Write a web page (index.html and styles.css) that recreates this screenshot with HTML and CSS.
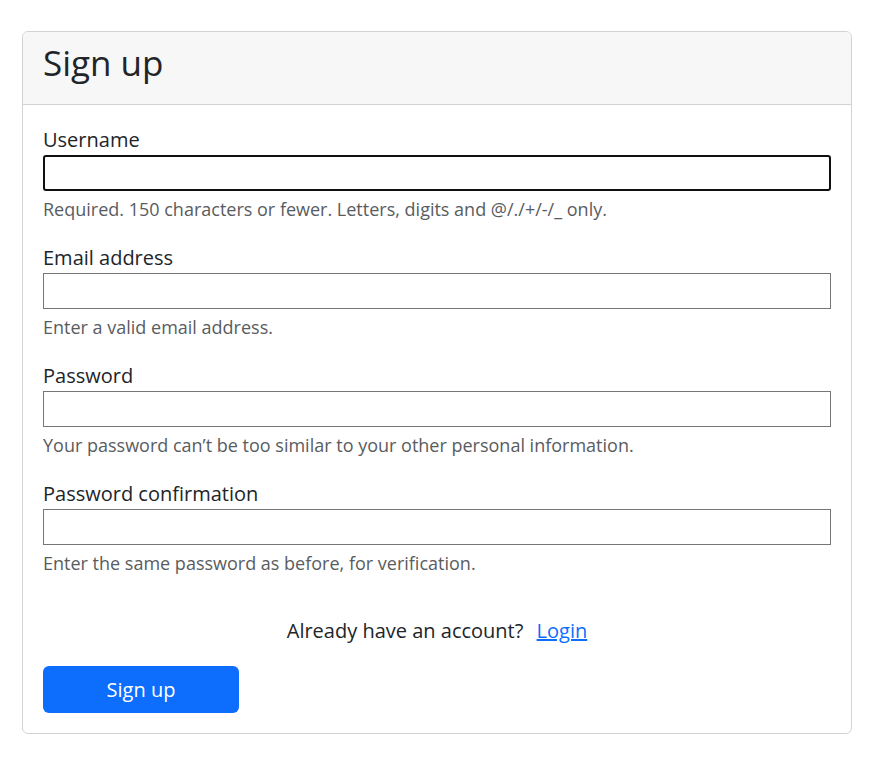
FILE: index.html
```html
<!DOCTYPE html>
<html lang="en">
<head>
<meta charset="utf-8">
<title>Sign up</title>
<link rel="stylesheet" href="styles.css">
</head>
<body>
<div class="page">
  <div class="card">
    <div class="card-header">
      <h1 class="title">Sign up</h1>
    </div>
    <form class="card-body">
      <div class="group">
        <label class="label" for="username">Username</label>
        <input class="input focused" id="username" type="text">
        <div class="help">Required. 150 characters or fewer. Letters, digits and @/./+/-/_ only.</div>
      </div>
      <div class="group">
        <label class="label" for="email">Email address</label>
        <input class="input" id="email" type="text">
        <div class="help">Enter a valid email address.</div>
      </div>
      <div class="group">
        <label class="label" for="password1">Password</label>
        <input class="input" id="password1" type="password">
        <div class="help">Your password can’t be too similar to your other personal information.</div>
      </div>
      <div class="group">
        <label class="label" for="password2">Password confirmation</label>
        <input class="input" id="password2" type="password">
        <div class="help">Enter the same password as before, for verification.</div>
      </div>
      <p class="account">Already have an account? <a class="login" href="#">Login</a></p>
      <button class="btn" type="button">Sign up</button>
    </form>
  </div>
</div>
</body>
</html>
```
FILE: styles.css
```css
* { box-sizing: border-box; }
html, body { margin: 0; padding: 0; background: #fff; }
body {
  font-family: "Open Sans", "Noto Sans", sans-serif;
  color: #212529;
  font-size: 20px;
  line-height: 1.5;
}
.page {
  padding: 31px 24px 0 22px;
}
.card {
  width: 830px;
  border: 1px solid #d3d3d3;
  border-radius: 6px;
  background: #fff;
  overflow: hidden;
}
.card-header {
  background: #f7f7f7;
  border-bottom: 1px solid #d3d3d3;
  padding: 10px 20px 20px;
}
.title {
  margin: 0;
  font-size: 35px;
  font-weight: 400;
  line-height: 42px;
}
.card-body {
  display: flex;
  flex-direction: column;
  padding: 20px 20px 20px;
}
.group {
  display: flex;
  flex-direction: column;
  margin-bottom: 20px;
}
.label {
  display: block;
  line-height: 30px;
}
.input {
  display: block;
  width: 788px;
  height: 36px;
  margin: 0;
  border: 1px solid #767676;
  border-radius: 0;
  background: #fff;
  font: inherit;
  padding: 0 4px;
}
.input.focused {
  border: 2px solid #101010;
  border-radius: 3px;
  outline: none;
}
.help {
  margin-top: 5px;
  font-size: 18px;
  line-height: 27px;
  color: #595c5f;
}
.account {
  margin: 19px 0 20px;
  text-align: center;
  line-height: 30px;
}
.login {
  color: #0d6efd;
  margin-left: 8px;
}
.btn {
  align-self: flex-start;
  width: 196px;
  height: 47px;
  border: 0;
  border-radius: 6px;
  background: #0d6efd;
  color: #fff;
  font: inherit;
  font-size: 20px;
  line-height: 30px;
  padding: 0;
}
```
